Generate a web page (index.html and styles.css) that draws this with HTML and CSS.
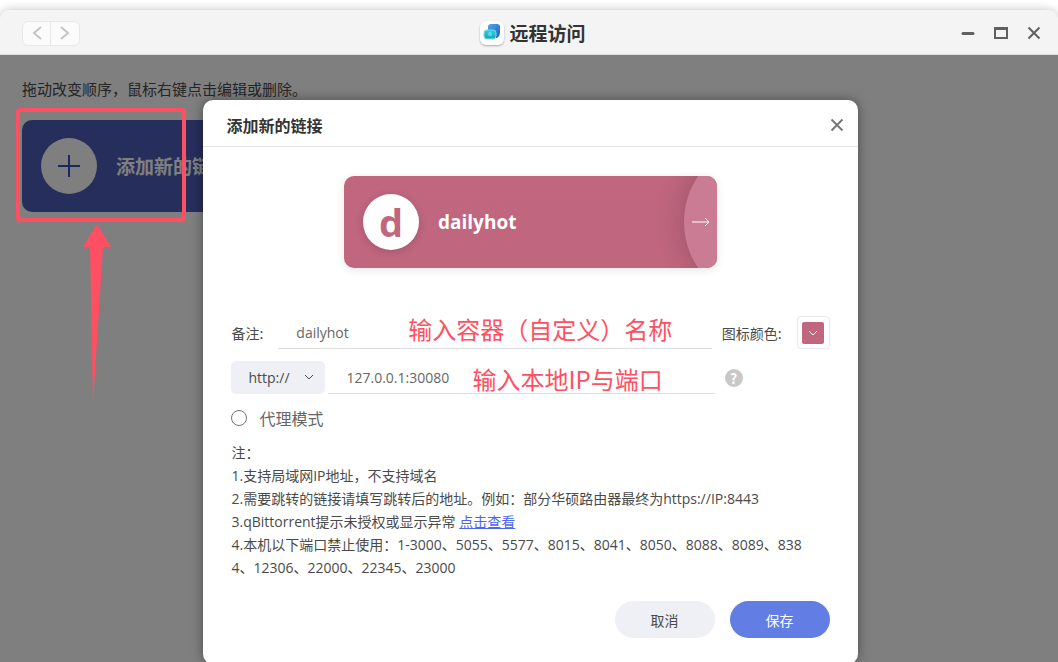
FILE: index.html
```
<!DOCTYPE html>
<html lang="zh-CN">
<head>
    <meta charset="UTF-8">
    <meta name="viewport" content="width=device-width, initial-scale=1.0">
    <title>远程访问</title>
    <link rel="stylesheet" href="styles.css">
</head>
<body>
    <div class="window">
        <header class="titlebar">
            <div class="nav">
                <button class="nav-btn" aria-label="后退"><svg width="12" height="16" viewBox="0 0 12 16"><path d="M10 2L3 8l7 6"/></svg></button>
                <button class="nav-btn" aria-label="前进"><svg width="12" height="16" viewBox="0 0 12 16"><path d="M2 2l7 6-7 6"/></svg></button>
            </div>
            <h1 class="title">
                <svg class="app-icon" width="24" height="24" viewBox="0 0 24 24">
                    <defs>
                        <linearGradient id="back" x1="0" y1="0" x2="1" y2="1"><stop offset="0" stop-color="#55a5ec"/><stop offset="1" stop-color="#1b62c4"/></linearGradient>
                        <linearGradient id="front" x1="0" y1="0" x2="0" y2="1"><stop offset="0" stop-color="#35cdd8"/><stop offset="1" stop-color="#1aa5bd"/></linearGradient>
                    </defs>
                    <path fill="url(#back)" d="M11 3h6a3 3 0 0 1 3 3v6q0 3-3 5H8V6a3 3 0 0 1 3-3z"/>
                    <rect fill="url(#front)" stroke="#6fdbe6" x="4" y="9" width="12" height="9" rx="3"/>
                    <circle cx="10" cy="13" r="2" fill="#5fd8e0"/>
                </svg>
                远程访问
            </h1>
            <div class="controls">
                <button class="control" aria-label="最小化"><svg width="14" height="14" viewBox="0 0 14 14"><path stroke-width="3" stroke-linecap="round" d="M2 7.500h10"/></svg></button>
                <button class="control" aria-label="最大化"><svg width="14" height="14" viewBox="0 0 14 14"><path d="M1 2h12v10H1z"/><path d="M1 3h12"/></svg></button>
                <button class="control" aria-label="关闭"><svg width="14" height="14" viewBox="0 0 14 14"><path d="M1.500 1.500l11 11M12.500 1.500l-11 11"/></svg></button>
            </div>
        </header>

        <main class="content">
            <p class="tip">拖动改变顺序，鼠标右键点击编辑或删除。</p>
            <button class="card card-add">
                <span class="card-icon"><svg width="24" height="24" viewBox="0 0 24 24"><path d="M12 1v22M1 12h22"/></svg></span>
                <span>添加新的链接</span>
            </button>

            <div class="overlay">
                <form class="dialog" role="dialog" aria-labelledby="dialog-title">
                    <div class="dialog-header">
                        <h2 id="dialog-title">添加新的链接</h2>
                        <button type="button" class="close" aria-label="关闭"><svg width="14" height="14" viewBox="0 0 14 14"><path d="M1.500 1.500l11 11M12.500 1.500l-11 11"/></svg></button>
                    </div>
                    <div class="dialog-body">
                        <div class="card card-preview">
                            <span class="card-icon">d</span>
                            <span>dailyhot</span>
                            <span class="card-go"></span>
                            <svg class="card-arrow" width="18" height="10" viewBox="0 0 18 10"><path d="M0 5h17M13 1l4 4-4 4"/></svg>
                        </div>

                        <div class="row">
                            <label for="remark">备注:</label>
                            <div class="field field-remark">
                                <input type="text" id="remark" value="dailyhot">
                                <span class="hint hint-remark">输入容器（自定义）名称</span>
                            </div>
                            <label for="color">图标颜色:</label>
                            <button type="button" id="color" class="color"><span class="swatch"><svg width="10" height="6" viewBox="0 0 10 6"><path d="M1 1l4 4 4-4"/></svg></span></button>
                        </div>

                        <div class="row row-address">
                            <div class="protocol">
                                <select aria-label="协议">
                                    <option>http://</option>
                                    <option>https://</option>
                                </select>
                                <svg width="10" height="6" viewBox="0 0 10 6"><path d="M1 1l4 4 4-4"/></svg>
                            </div>
                            <div class="field field-address">
                                <input type="text" aria-label="地址" value="127.0.0.1:30080">
                                <span class="hint hint-address">输入本地IP与端口</span>
                            </div>
                            <button type="button" class="help">?</button>
                        </div>

                        <label class="proxy"><input type="radio" name="proxy">代理模式</label>

                        <div class="notes">
                            <p>注：</p>
                            <p>1.支持局域网IP地址，不支持域名</p>
                            <p>2.需要跳转的链接请填写跳转后的地址。例如：部分华硕路由器最终为https://IP:8443</p>
                            <p>3.qBittorrent提示未授权或显示异常 <a href="#">点击查看</a></p>
                            <p>4.本机以下端口禁止使用：1-3000、5055、5577、8015、8041、8050、8088、8089、8384、12306、22000、22345、23000</p>
                        </div>

                        <div class="actions">
                            <button type="button" class="btn">取消</button>
                            <button type="submit" class="btn btn-primary">保存</button>
                        </div>
                    </div>
                </form>
            </div>

            <svg class="marker" width="170" height="300" viewBox="0 0 170 300">
                <rect x="2" y="2" width="166" height="110" rx="2"/>
                <path d="M81 116l14 23h-8L77 296 74 139h-7z"/>
            </svg>
        </main>
    </div>
</body>
</html>
```
FILE: styles.css
```
* {
    box-sizing: border-box;
}

body {
    margin: 0;
    height: 100vh;
    padding-top: 10px;
    overflow: hidden;
    background-color: #fff;
    color: #4a4a4a;
    font-family: "Noto Sans CJK SC", "Open Sans", sans-serif;
    font-size: 14px;
}

h1, h2, p {
    margin: 0;
}

button, input, select {
    font: inherit;
    color: inherit;
    border: none;
    outline: none;
    background: none;
    padding: 0;
}

svg {
    fill: none;
    stroke: currentColor;
    display: block;
}

.window {
    height: 100%;
    display: flex;
    flex-direction: column;
    border-radius: 10px 10px 0 0;
    box-shadow: 0 0 10px rgba(0, 0, 0, 0.25);
    overflow: hidden;
}

.titlebar {
    display: grid;
    grid-template-columns: 1fr auto 1fr;
    align-items: center;
    height: 45px;
    padding: 2px 14px 0 22px;
    background-color: #f4f4f4;
    border-bottom: 1px solid #ddd;
}

.nav {
    display: flex;
    justify-self: start;
    border: 1px solid #e8e8e8;
    border-radius: 6px;
    background-color: #fbfbfb;
}

.nav-btn {
    width: 28px;
    height: 23px;
    display: flex;
    justify-content: center;
    align-items: center;
    color: #c4c4c4;
    stroke-width: 2;
}

.nav-btn:first-child {
    border-right: 1px solid #e8e8e8;
}

.title {
    display: flex;
    align-items: center;
    gap: 5px;
    font-size: 19px;
    line-height: 24px;
    color: #333;
}

.app-icon {
    background-color: #fff;
    border-radius: 6px;
    stroke: none;
    box-shadow: 0 1px 2px rgba(0, 0, 0, 0.3);
}

.controls {
    display: flex;
    gap: 13px;
    justify-self: end;
}

.control {
    width: 20px;
    height: 20px;
    display: flex;
    justify-content: center;
    align-items: center;
    color: #606060;
    stroke-width: 2;
}

.content {
    position: relative;
    flex: 1;
    padding: 23px 22px;
    background-color: #fff;
}

.tip {
    margin-bottom: 20px;
    font-size: 15px;
    line-height: 22px;
}

.card {
    position: relative;
    display: flex;
    align-items: center;
    gap: 19px;
    width: 373px;
    height: 92px;
    padding: 0 19px;
    border-radius: 10px;
    overflow: hidden;
    color: #fff;
    font-family: "Open Sans", "Noto Sans CJK SC", sans-serif;
    font-size: 19px;
    font-weight: bold;
}

.card-icon {
    display: flex;
    justify-content: center;
    align-items: center;
    width: 56px;
    height: 56px;
    border-radius: 50%;
    background-color: #fff;
}

.card-add {
    background-color: #4c5cb8;
}

.card-add .card-icon {
    color: #3350c8;
    stroke-width: 2;
}

.card-preview {
    margin: 0 auto 48px;
    background-color: #c0667f;
    box-shadow: 0 2px 10px rgba(0, 0, 0, 0.1);
}

.card-preview .card-icon {
    color: #c0667f;
    font-size: 38px;
    line-height: 56px;
    box-shadow: 0 2px 8px rgba(0, 0, 0, 0.15);
}

.card-go {
    position: absolute;
    top: -36px;
    right: -131px;
    width: 164px;
    height: 164px;
    border-radius: 50%;
    background-color: #c97c94;
    box-shadow: 0 0 30px rgba(0, 0, 0, 0.2);
}

.card-arrow {
    position: absolute;
    right: 7px;
}

/* dialog */
.overlay {
    position: absolute;
    inset: 0;
    display: flex;
    justify-content: center;
    align-items: flex-start;
    padding: 45px 0 0 3px;
    background-color: rgba(0, 0, 0, 0.5);
}

.dialog {
    width: 62%;
    border-radius: 10px;
    background-color: #fff;
    box-shadow: 0 0 12px rgba(0, 0, 0, 0.4);
}

.dialog-header {
    display: flex;
    justify-content: space-between;
    align-items: center;
    height: 47px;
    padding: 3px 14px 0 23px;
    border-bottom: 1px solid #e4e4e4;
}

.dialog-header h2 {
    font-size: 16px;
    color: #333;
}

.close {
    color: #777;
    stroke-width: 2;
}

.dialog-body {
    padding: 29px 28px 26px;
}

.row {
    display: flex;
    align-items: center;
    height: 33px;
    margin-bottom: 12px;
}

.field {
    position: relative;
    flex: 1;
    height: 33px;
    border-bottom: 1px solid #ddd;
}

.field input {
    width: 100%;
    height: 32px;
    padding: 0 18px;
    color: #666;
    font-family: "Open Sans", sans-serif;
}

.field-remark {
    margin: 0 10px 0 15px;
}

.field-address {
    margin: 0 10px 0 3px;
}

.color {
    display: flex;
    justify-content: center;
    align-items: center;
    width: 33px;
    height: 33px;
    margin-left: 15px;
    border: 1px solid #e8e8e8;
    border-radius: 4px;
}

.swatch {
    display: flex;
    justify-content: center;
    align-items: center;
    width: 22px;
    height: 22px;
    border-radius: 2px;
    background-color: #c0667f;
    color: #fff;
}

.row-address {
    padding-right: 87px;
}

.protocol {
    position: relative;
    width: 94px;
}

.protocol select {
    appearance: none;
    width: 100%;
    height: 33px;
    padding: 0 17px;
    border-radius: 5px;
    background-color: #eff0f5;
    font-family: "Open Sans", sans-serif;
}

.protocol svg {
    position: absolute;
    top: 13px;
    right: 11px;
    pointer-events: none;
}

.help {
    width: 18px;
    height: 18px;
    border-radius: 50%;
    background-color: #c8c8c8;
    color: #fff;
    font-weight: bold;
    line-height: 18px;
}

.proxy {
    display: flex;
    align-items: center;
    gap: 12px;
    height: 24px;
    margin-bottom: 11px;
    font-size: 16px;
    color: #666;
}

.proxy input {
    appearance: none;
    width: 16px;
    height: 16px;
    margin: 0;
    border: 1px solid #777;
    border-radius: 50%;
}

.proxy input:checked {
    border: 5px solid #627de3;
}

.notes {
    padding-right: 12px;
    font-family: "Open Sans", "Noto Sans CJK SC", sans-serif;
    line-height: 23px;
    word-break: break-all;
}

.notes a {
    color: #4d65f0;
}

.actions {
    display: flex;
    justify-content: flex-end;
    gap: 15px;
    margin-top: 22px;
}

.btn {
    width: 100px;
    height: 37px;
    border-radius: 19px;
    background-color: #eff0f5;
}

.btn-primary {
    background-color: #627de3;
    color: #fff;
}

/* red marks on top of the screen */
.hint {
    position: absolute;
    color: #ff4f62;
    font-size: 24px;
    line-height: 32px;
    white-space: nowrap;
    pointer-events: none;
}

.hint-remark {
    top: -3px;
    left: 130px;
}

.hint-address {
    top: 2px;
    left: 144px;
}

.marker {
    position: absolute;
    top: 53px;
    left: 16px;
    pointer-events: none;
}

.marker rect {
    stroke: #ff4f62;
    stroke-width: 4;
}

.marker path {
    fill: #ff4f62;
    stroke: none;
}
```
